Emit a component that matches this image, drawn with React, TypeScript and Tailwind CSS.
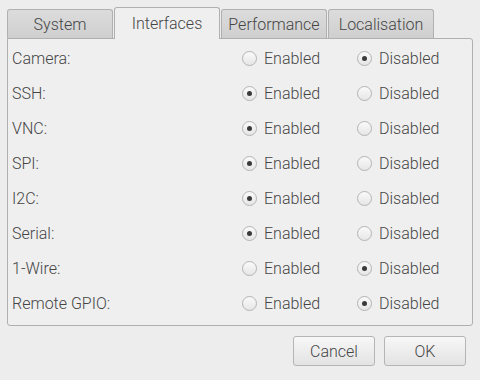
const rows: [string, boolean][] = [
  ["Camera:", false],
  ["SSH:", true],
  ["VNC:", true],
  ["SPI:", true],
  ["I2C:", true],
  ["Serial:", true],
  ["1-Wire:", false],
  ["Remote GPIO:", false],
];

const tabs = ["System", "Interfaces", "Performance", "Localisation"];

function Radio({ checked, label }: { checked: boolean; label: string }) {
  return (
    <div className="flex items-center">
      <span className="w-[15px] h-[15px] rounded-full border border-[#b4b4b4] bg-gradient-to-b from-[#fafafa] to-[#e6e6e6] flex items-center justify-center">
        {checked && <span className="w-[5px] h-[5px] rounded-full bg-[#3a3a3a]" />}
      </span>
      <span className="ml-[7px]">{label}</span>
    </div>
  );
}

export default function App() {
  return (
    <div
      className="w-[480px] h-[380px] bg-[#ededed] text-[#454545] text-[16px] font-light overflow-hidden"
      style={{ fontFamily: "Roboto, 'Liberation Sans', sans-serif" }}
    >
      <div className="flex items-end pl-[7px] pt-[7px] gap-[1px] h-[38px]">
        {tabs.map((t) =>
          t === "Interfaces" ? (
            <div
              key={t}
              className="w-[106px] h-[32px] -mb-px relative z-10 border border-b-0 border-[#b0b0b0] rounded-t-[3px] bg-[#efefef] flex items-center justify-center"
            >
              {t}
            </div>
          ) : (
            <div
              key={t}
              className="w-[106px] h-[29px] border border-b-0 border-[#b0b0b0] rounded-t-[3px] bg-gradient-to-b from-[#dcdcdc] to-[#cfcfcf] flex items-center justify-center pt-[2px]"
            >
              {t}
            </div>
          )
        )}
      </div>
      <div className="mx-[7px] w-[466px] border border-[#b0b0b0] rounded-b-[3px] rounded-tr-[3px] bg-[#efefef] pt-[2px] pb-[4px]">
        {rows.map(([name, en]) => (
          <div key={name} className="h-[35px] flex items-center pl-[4px]">
            <span className="w-[230px]">{name}</span>
            <div className="w-[115px]">
              <Radio checked={en} label="Enabled" />
            </div>
            <Radio checked={!en} label="Disabled" />
          </div>
        ))}
      </div>
      <div className="flex justify-end gap-[9px] pr-[14px] mt-[10px]">
        {["Cancel", "OK"].map((b) => (
          <button
            key={b}
            className="w-[82px] h-[30px] border border-[#b5b5b5] rounded-[3px] bg-gradient-to-b from-[#f7f7f7] to-[#e3e3e3] text-[#454545] pt-[1px]"
          >
            {b}
          </button>
        ))}
      </div>
    </div>
  );
}
